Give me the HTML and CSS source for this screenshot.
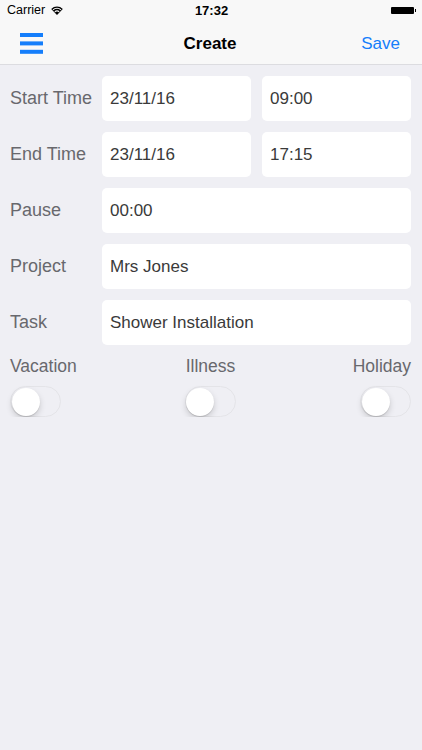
FILE: index.html
```html
<!DOCTYPE html>
<html lang="en">
<head>
  <meta charset="UTF-8">
  <meta name="viewport" content="width=device-width, initial-scale=1.0">
  <title>Create</title>
  <link rel="stylesheet" href="styles.css">
</head>
<body>
  <div class="status-bar">
    <div class="status-left">
      <span>Carrier</span>
      <svg class="wifi" width="12" height="9" viewBox="0 0 12 9">
        <path d="M6 9 L0.2 2.9 A8.3 8.3 0 0 1 11.8 2.9 Z" fill="#000"/>
        <path d="M2 3.9 A5.7 5.7 0 0 1 10 3.9" stroke="#f8f8f8" stroke-width="1.1" fill="none"/>
        <path d="M3.8 5.8 A3.1 3.1 0 0 1 8.2 5.8" stroke="#f8f8f8" stroke-width="1.1" fill="none"/>
      </svg>
    </div>
    <div class="status-time">17:32</div>
    <div class="status-right">
      <div class="battery"></div>
    </div>
  </div>

  <header class="nav-bar">
    <svg class="menu-icon" width="23" height="21" viewBox="0 0 23 21">
      <rect x="0" y="0" width="23" height="4" fill="#157efb"/>
      <rect x="0" y="8.4" width="23" height="4" fill="#157efb"/>
      <rect x="0" y="16.8" width="23" height="4" fill="#157efb"/>
    </svg>
    <h1 class="nav-title">Create</h1>
    <span class="nav-action">Save</span>
  </header>

  <main class="form">
    <div class="form-row">
      <span class="form-label">Start Time</span>
      <div class="field">23/11/16</div>
      <div class="field">09:00</div>
    </div>
    <div class="form-row">
      <span class="form-label">End Time</span>
      <div class="field">23/11/16</div>
      <div class="field">17:15</div>
    </div>
    <div class="form-row">
      <span class="form-label">Pause</span>
      <div class="field field-wide">00:00</div>
    </div>
    <div class="form-row">
      <span class="form-label">Project</span>
      <div class="field field-wide">Mrs Jones</div>
    </div>
    <div class="form-row">
      <span class="form-label">Task</span>
      <div class="field field-wide">Shower Installation</div>
    </div>

    <div class="toggles">
      <div class="toggle-item">
        <span class="toggle-label">Vacation</span>
        <div class="switch"><div class="knob"></div></div>
      </div>
      <div class="toggle-item toggle-center">
        <span class="toggle-label">Illness</span>
        <div class="switch"><div class="knob"></div></div>
      </div>
      <div class="toggle-item toggle-right">
        <span class="toggle-label">Holiday</span>
        <div class="switch"><div class="knob"></div></div>
      </div>
    </div>
  </main>
</body>
</html>
```

FILE: styles.css
```css
body {
  margin: 0;
  padding: 0;
  font-family: "Liberation Sans", Arial, Helvetica, sans-serif;
  background-color: #efeff4;
  color: #333;
}

/* Status bar */
.status-bar {
  height: 20px;
  background-color: #f8f8f8;
  display: grid;
  grid-template-columns: 1fr auto 1fr;
  align-items: center;
  padding: 0 6px 0 7px;
  font-size: 12.5px;
  color: #000;
}

.status-left {
  display: flex;
  align-items: center;
  gap: 6px;
}

.status-time {
  font-weight: bold;
  font-size: 13px;
}

.status-right {
  display: flex;
  justify-content: flex-end;
  padding-right: 2px;
}

.battery {
  position: relative;
  width: 23px;
  height: 7px;
  background-color: #000;
  border-radius: 1px;
}

.battery::after {
  content: "";
  position: absolute;
  right: -2px;
  top: 2px;
  width: 1.5px;
  height: 3px;
  background-color: #000;
}

/* Navigation bar */
.nav-bar {
  height: 45px;
  box-sizing: border-box;
  background-color: #f8f8f8;
  border-bottom: 1px solid #dcdce0;
  display: grid;
  grid-template-columns: 1fr auto 1fr;
  align-items: center;
  padding: 3px 22px 0 20px;
}

.menu-icon {
  display: block;
}

.nav-title {
  margin: 0;
  font-size: 17px;
  font-weight: bold;
  color: #000;
}

.nav-action {
  justify-self: end;
  font-size: 17px;
  color: #157efb;
}

/* Form */
.form {
  padding: 11px 11px 0 10px;
  display: flex;
  flex-direction: column;
  gap: 11px;
}

.form-row {
  display: grid;
  grid-template-columns: 81px 1fr 1fr;
  column-gap: 11px;
  height: 45px;
  align-items: center;
}

.form-label {
  font-size: 18px;
  color: #68686d;
  white-space: nowrap;
}

.field {
  height: 45px;
  line-height: 45px;
  background-color: #fff;
  border-radius: 5px;
  padding: 0 8px;
  font-size: 17px;
  color: #3a3a3a;
}

.field-wide {
  grid-column: span 2;
}

/* Toggles */
.toggles {
  display: grid;
  grid-template-columns: 1fr 1fr 1fr;
  margin-top: -1px;
}

.toggle-item {
  display: flex;
  flex-direction: column;
  align-items: flex-start;
  gap: 9px;
}

.toggle-center {
  align-items: center;
}

.toggle-right {
  align-items: flex-end;
}

.toggle-label {
  font-size: 17.5px;
  line-height: 22px;
  color: #68686d;
}

.switch {
  width: 51px;
  height: 31px;
  box-sizing: border-box;
  border: 1.5px solid #e4e4e8;
  border-radius: 16px;
  padding: 0.5px;
}

.knob {
  width: 28px;
  height: 28px;
  border-radius: 50%;
  background-color: #fff;
  box-shadow: 0 3px 6px rgba(0, 0, 0, 0.16), 0 1px 1px rgba(0, 0, 0, 0.12);
}
```
